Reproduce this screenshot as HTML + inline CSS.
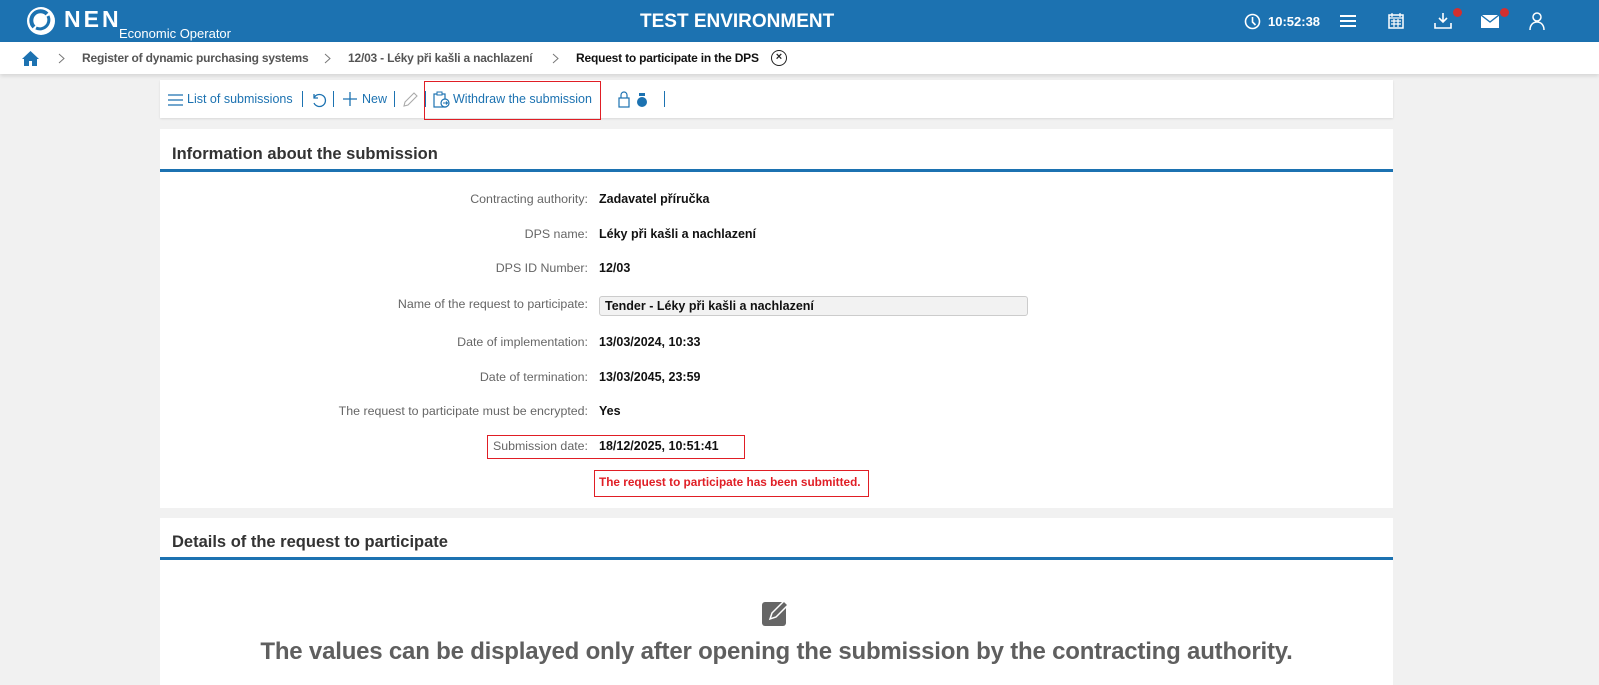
<!DOCTYPE html>
<html><head><meta charset="utf-8"><style>
*{margin:0;padding:0;box-sizing:border-box}
body{width:1599px;height:685px;overflow:hidden;background:#f1f1f1;font-family:"Liberation Sans",Arial,sans-serif;position:relative}
.hdr{position:absolute;left:0;top:0;width:1599px;height:42px;background:#1c72b1;color:#fff}
.bc{position:absolute;left:0;top:42px;width:1599px;height:32px;background:#fff;box-shadow:0 2px 4px rgba(0,0,0,.12);font-size:12px;font-weight:bold;color:#555;letter-spacing:-0.2px}
.bc span{position:absolute;top:9px;white-space:nowrap}
.chev{position:absolute;top:11px}
.panel{position:absolute;left:160px;width:1233px;background:#fff}
.lbl{position:absolute;right:1011px;font-size:12.4px;color:#666;text-align:right;white-space:nowrap}
.val{position:absolute;left:599px;font-size:12.5px;font-weight:bold;color:#111;white-space:nowrap}
.tb{position:absolute;top:92px;font-size:12.5px;color:#1c72b1;white-space:nowrap}
.sep{position:absolute;top:91px;width:1px;height:16px;background:#1c72b1}
</style></head><body>
<div class="hdr">
<svg style="position:absolute;left:25px;top:5px" width="32" height="32" viewBox="0 0 32 32"><circle cx="16" cy="16" r="14" fill="#fff"/><path d="M9 22 A9 9 0 0 1 22 9" stroke="#1c72b1" stroke-width="4" fill="none"/><path d="M23 11 A9 9 0 0 1 11 23" stroke="#1c72b1" stroke-width="3" fill="none"/></svg>
<div style="position:absolute;left:64px;top:6px;font-size:23px;font-weight:bold;letter-spacing:3px">NEN</div>
<div style="position:absolute;left:119px;top:26px;font-size:13px">Economic Operator</div>
<div style="position:absolute;left:640px;top:11px;font-size:19px;font-weight:bold">TEST ENVIRONMENT</div>
<svg style="position:absolute;left:1244px;top:13px" width="17" height="17"><circle cx="8.5" cy="8.5" r="7" stroke="#fff" stroke-width="1.6" fill="none"/><path d="M8.5 4v5l3 3" stroke="#fff" stroke-width="1.6" fill="none"/></svg>
<div style="position:absolute;left:1268px;top:14px;font-size:13px;font-weight:bold">10:52:38</div>
<svg style="position:absolute;left:1340px;top:14px" width="16" height="14"><path d="M0 2h16M0 7h16M0 12h16" stroke="#fff" stroke-width="2"/></svg>
<svg style="position:absolute;left:1388px;top:13px" width="16" height="16"><rect x="1" y="2" width="14" height="13" fill="none" stroke="#fff" stroke-width="1.5"/><path d="M1 5h14M4 0v4M12 0v4M3 8h10M3 11h10M6 6v8M10 6v8" stroke="#fff" stroke-width="1.2"/></svg>
<svg style="position:absolute;left:1434px;top:12px" width="18" height="18"><path d="M9 1v9M5 6l4 4 4-4M1 11v5h16v-5" stroke="#fff" stroke-width="1.6" fill="none"/></svg>
<div style="position:absolute;left:1453px;top:8px;width:9px;height:9px;border-radius:50%;background:#d32f2f"></div>
<svg style="position:absolute;left:1481px;top:15px" width="18" height="13"><rect width="18" height="13" fill="#fff"/><path d="M0 0l9 7 9-7" stroke="#1c72b1" stroke-width="1.3" fill="none"/></svg>
<div style="position:absolute;left:1500px;top:8px;width:9px;height:9px;border-radius:50%;background:#d32f2f"></div>
<svg style="position:absolute;left:1529px;top:12px" width="16" height="18"><circle cx="8" cy="5" r="4" stroke="#fff" stroke-width="1.5" fill="none"/><path d="M1 18c0-5 3-8 7-8s7 3 7 8" stroke="#fff" stroke-width="1.5" fill="none"/></svg>
</div>
<div class="bc">
<svg style="position:absolute;left:22px;top:8px" width="17" height="16"><path d="M8.5 1L0 9h2v7h5v-5h3v5h5V9h2z" fill="#1c72b1"/></svg>
<svg class="chev" style="left:58px" width="7" height="11"><path d="M1 1l5 4.5L1 10" stroke="#777" fill="none"/></svg>
<span style="left:82px">Register of dynamic purchasing systems</span>
<svg class="chev" style="left:324px" width="7" height="11"><path d="M1 1l5 4.5L1 10" stroke="#777" fill="none"/></svg>
<span style="left:348px">12/03 - Léky při kašli a nachlazení</span>
<svg class="chev" style="left:552px" width="7" height="11"><path d="M1 1l5 4.5L1 10" stroke="#777" fill="none"/></svg>
<span style="left:576px;color:#111">Request to participate in the DPS</span>
<span style="left:771px;top:8px;width:16px;height:16px;border:1.3px solid #222;border-radius:50%;font-size:11px;line-height:13px;text-align:center;color:#222;letter-spacing:0">×</span>
</div>
<div class="panel" style="top:80px;height:38px;box-shadow:0 1px 2px rgba(0,0,0,.1)"></div>
<svg style="position:absolute;left:168px;top:94px" width="15" height="12"><path d="M0 1h15M0 6h15M0 11h15" stroke="#1c72b1" stroke-width="1.3"/></svg>
<div class="tb" style="left:187px">List of submissions</div>
<div class="sep" style="left:302px"></div>
<svg style="position:absolute;left:311px;top:92px" width="16" height="16"><path d="M3 6A6 6 0 1 1 3 11M3 2v4h4" stroke="#1c72b1" stroke-width="1.3" fill="none"/></svg>
<div class="sep" style="left:333px"></div>
<svg style="position:absolute;left:343px;top:92px" width="14" height="14"><path d="M7 0v14M0 7h14" stroke="#1c72b1" stroke-width="1.3"/></svg>
<div class="tb" style="left:362px">New</div>
<div class="sep" style="left:394px"></div>
<svg style="position:absolute;left:402px;top:91px" width="16" height="17"><path d="M2 15l1-4 9-9 3 3-9 9z" stroke="#aaa" stroke-width="1.1" fill="none"/></svg>
<div class="sep" style="left:425px"></div>
<div style="position:absolute;left:424px;top:81px;width:177px;height:39px;border:1px solid #e01e25"></div>
<svg style="position:absolute;left:433px;top:91px" width="17" height="17"><rect x="1" y="3" width="11" height="13" fill="none" stroke="#1c72b1" stroke-width="1.2"/><rect x="4" y="1" width="5" height="3" fill="#fff" stroke="#1c72b1"/><circle cx="12" cy="12" r="4" fill="#fff" stroke="#1c72b1" stroke-width="1.2"/><path d="M10 12h4M13 10.5l1.5 1.5-1.5 1.5" stroke="#1c72b1" fill="none"/></svg>
<div class="tb" style="left:453px">Withdraw the submission</div>
<svg style="position:absolute;left:618px;top:91px" width="32" height="17"><rect x="1" y="7" width="10" height="9" fill="none" stroke="#1c72b1" stroke-width="1.2"/><path d="M3 7V4a3 3 0 0 1 6 0v3" stroke="#1c72b1" stroke-width="1.2" fill="none"/><rect x="21" y="2" width="6" height="3" fill="#1c72b1"/><circle cx="24" cy="11" r="5" fill="#1c72b1"/></svg>
<div class="sep" style="left:664px"></div>

<div class="panel" style="top:129px;height:379px">
<div style="position:absolute;left:12px;top:16px;font-size:16.5px;font-weight:bold;color:#333">Information about the submission</div>
<div style="position:absolute;left:0;top:40px;width:1233px;height:3px;background:#1c72b1"></div>
</div>
<div class="lbl" style="top:192px">Contracting authority:</div><div class="val" style="top:192px">Zadavatel příručka</div>
<div class="lbl" style="top:227px">DPS name:</div><div class="val" style="top:227px">Léky při kašli a nachlazení</div>
<div class="lbl" style="top:261px">DPS ID Number:</div><div class="val" style="top:261px">12/03</div>
<div class="lbl" style="top:297px">Name of the request to participate:</div>
<div style="position:absolute;left:599px;top:296px;width:429px;height:20px;background:#f2f2f2;border:1px solid #ccc;border-radius:3px;font-size:12.5px;font-weight:bold;padding:2px 5px;color:#111">Tender - Léky při kašli a nachlazení</div>
<div class="lbl" style="top:335px">Date of implementation:</div><div class="val" style="top:335px">13/03/2024, 10:33</div>
<div class="lbl" style="top:370px">Date of termination:</div><div class="val" style="top:370px">13/03/2045, 23:59</div>
<div class="lbl" style="top:404px">The request to participate must be encrypted:</div><div class="val" style="top:404px">Yes</div>
<div style="position:absolute;left:487px;top:435px;width:258px;height:24px;border:1px solid #e01e25"></div>
<div class="lbl" style="top:439px">Submission date:</div><div class="val" style="top:439px">18/12/2025, 10:51:41</div>
<div style="position:absolute;left:594px;top:470px;width:275px;height:27px;border:1px solid #e01e25"></div>
<div style="position:absolute;left:599px;top:475px;font-size:11.8px;font-weight:bold;color:#e01e25">The request to participate has been submitted.</div>

<div class="panel" style="top:518px;height:167px">
<div style="position:absolute;left:12px;top:15px;font-size:16.5px;font-weight:bold;color:#333">Details of the request to participate</div>
<div style="position:absolute;left:0;top:39px;width:1233px;height:3px;background:#1c72b1"></div>
<svg style="position:absolute;left:601px;top:79px" width="32" height="32"><rect x="1" y="5" width="24" height="24" rx="3" fill="#666"/><path d="M9 22l2-6 12-12 4 4-12 12z" fill="#666" stroke="#fff" stroke-width="1.5"/></svg>
<div style="position:absolute;left:0;width:1233px;top:120px;text-align:center;font-size:24px;font-weight:bold;color:#5f5f5f;letter-spacing:-0.2px">The values can be displayed only after opening the submission by the contracting authority.</div>
</div>
</body></html>
